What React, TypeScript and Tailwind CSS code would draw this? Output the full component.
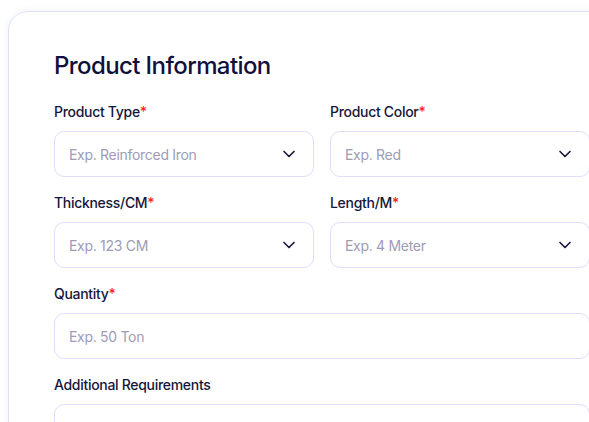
import React from 'react';
import { ChevronDown } from 'lucide-react';

const Label = ({ text, required }: { text: string; required?: boolean }) => (
  <label className="block text-[14px] leading-[20px] font-medium tracking-[-0.3px] text-[#16163a] mb-[9px]">
    {text}
    {required && <span className="text-[#ff1f1f]">*</span>}
  </label>
);

const SelectField = ({ label, placeholder }: { label: string; placeholder: string }) => (
  <div>
    <Label text={label} required />
    <div className="h-[46px] flex items-center justify-between pl-[14px] pr-[14px] rounded-[10px] border border-[#dedefa] bg-white">
      <span className="text-[14px] tracking-[-0.3px] text-[#9c9cb6]">{placeholder}</span>
      <ChevronDown size={20} strokeWidth={2} className="text-[#16163a]" />
    </div>
  </div>
);

export default function App() {
  return (
    <div className="w-[589px] h-[422px] overflow-hidden bg-white font-['Inter',sans-serif]">
      <div className="ml-[8px] mt-[11px] w-[628px] h-[460px] rounded-[20px] border border-[#dfe2f2] bg-white shadow-[0_0_10px_rgba(30,40,90,0.05)] pt-[38px] pl-[45px]">
        <h1 className="text-[24px] leading-[32px] font-medium tracking-[-0.6px] text-[#10103a] mb-[20px]">Product Information</h1>

        <div className="w-[536px] grid grid-cols-2 gap-x-[16px] gap-y-[16px]">
          <SelectField label="Product Type" placeholder="Exp. Reinforced Iron" />
          <SelectField label="Product Color" placeholder="Exp. Red" />
          <SelectField label="Thickness/CM" placeholder="Exp. 123 CM" />
          <SelectField label="Length/M" placeholder="Exp. 4 Meter" />

          <div className="col-span-2">
            <Label text="Quantity" required />
            <div className="h-[46px] flex items-center pl-[14px] rounded-[10px] border border-[#dedefa] bg-white">
              <span className="text-[14px] tracking-[-0.3px] text-[#9c9cb6]">Exp. 50 Ton</span>
            </div>
          </div>

          <div className="col-span-2">
            <Label text="Additional Requirements" />
            <div className="h-[100px] rounded-[10px] border border-[#dedefa] bg-white" />
          </div>
        </div>
      </div>
    </div>
  );
}
